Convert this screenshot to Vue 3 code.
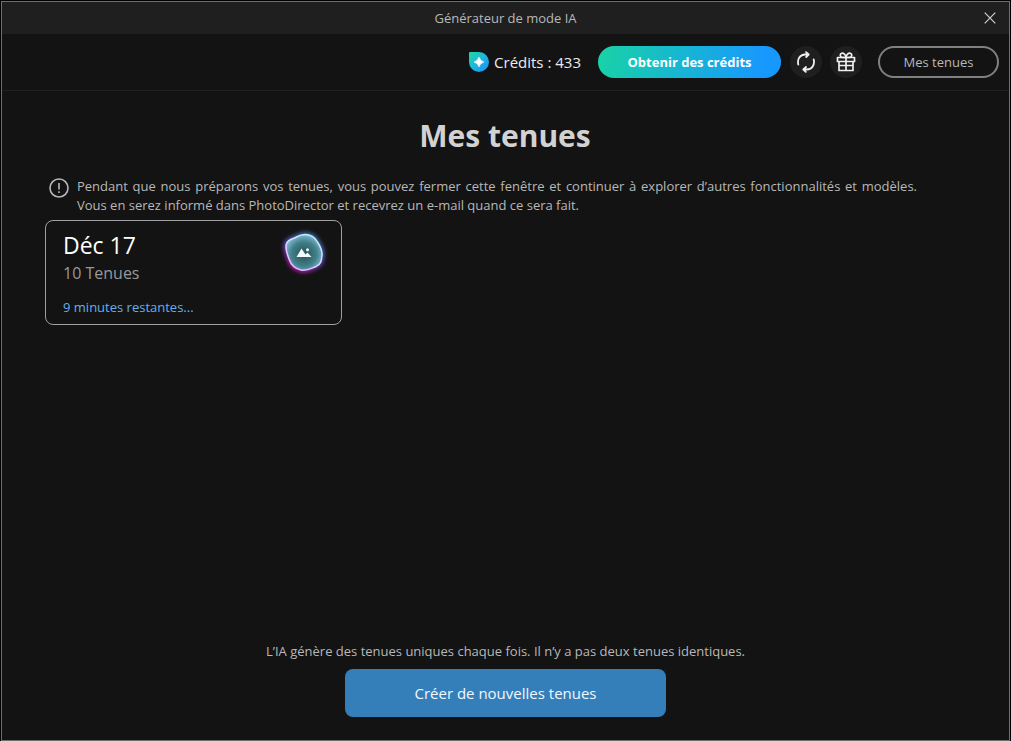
<script setup>
const credits = 433
const outfits = [
  { id: 1, date: 'Déc 17', count: '10 Tenues', status: '9 minutes restantes...' }
]
</script>

<template>
  <div class="window">
    <header class="titlebar">
      <span class="window-title">Générateur de mode IA</span>
      <button class="close" type="button" aria-label="Fermer">
        <svg width="12" height="12" viewBox="0 0 12 12" fill="none" stroke="#cfcfcf" stroke-width="1.2">
          <path d="M.7.7 11.3 11.3M11.3.7.7 11.3" />
        </svg>
      </button>
    </header>

    <nav class="toolbar">
      <div class="credits">
        <svg width="20" height="20" viewBox="0 0 20 20">
          <defs>
            <linearGradient id="credit-fill" x1="0" y1="0" x2="1" y2="1">
              <stop offset="0" stop-color="#1fd8a4" />
              <stop offset=".5" stop-color="#20b5dc" />
              <stop offset="1" stop-color="#1a8cff" />
            </linearGradient>
          </defs>
          <path d="M1 0H10a10 10 0 1 1-10 10V1Q0 0 1 0Z" fill="url(#credit-fill)" />
          <path d="M10 5.200Q11 9 14.800 10 11 11 10 14.800 9 11 5.200 10 9 9 10 5.200Z" fill="#fff" stroke="#fff" stroke-width=".8" stroke-linejoin="round" />
        </svg>
        <span>Crédits : {{ credits }}</span>
      </div>
      <button class="buy" type="button">Obtenir des crédits</button>
      <button class="round" type="button" aria-label="Actualiser">
        <svg width="20" height="22" viewBox="0 0 20 22" fill="none" stroke="#f0f0f0" stroke-width="1.8" stroke-linecap="round" stroke-linejoin="round">
          <path d="M2.300 13.500C1 8 4 3.800 9 3.500H12.500M10 1.100 12.700 3.500 10.200 6" />
          <path d="M17.700 8.500C19 14 16 18.200 11 18.500H7.500M10 16 7.300 18.500 9.800 20.900" />
        </svg>
      </button>
      <button class="round" type="button" aria-label="Cadeau">
        <svg width="20" height="20" viewBox="0 0 20 20" fill="none" stroke="#f0f0f0" stroke-width="1.700" stroke-linejoin="round">
          <path d="M1.500 5.500H18.500V9.500H1.500ZM3 9.500V18.500H17V9.500M10 5.500V18.500M3 13.500H17" />
          <path d="M10 5.500H6.500A2.200 2.200 0 1 1 8.400 2.200Q10 3.500 10 5.500ZM10 5.500H13.500A2.200 2.200 0 1 0 11.600 2.200Q10 3.500 10 5.500Z" />
        </svg>
      </button>
      <button class="mine" type="button">Mes tenues</button>
    </nav>

    <main class="content">
      <h1>Mes tenues</h1>
      <div class="notice">
        <svg width="20" height="20" viewBox="0 0 20 20" fill="none" stroke="#b8b8b8" stroke-width="1.600">
          <circle cx="10" cy="10" r="9" />
          <path d="M10 5V11.500" />
          <path d="M10 13.200V15" />
        </svg>
        <p>
          Pendant que nous préparons vos tenues, vous pouvez fermer cette fenêtre et continuer à explorer d’autres fonctionnalités et modèles.
          Vous en serez informé dans PhotoDirector et recevrez un e-mail quand ce sera fait.
        </p>
      </div>

      <section class="grid">
        <article v-for="item in outfits" :key="item.id" class="card">
          <div class="info">
            <h2>{{ item.date }}</h2>
            <p class="count">{{ item.count }}</p>
            <p class="status">{{ item.status }}</p>
          </div>
          <svg class="orb" width="56" height="56" viewBox="0 0 56 56">
            <defs>
              <radialGradient id="orb-fill" cx=".5" cy=".55" r=".58">
                <stop offset="0" stop-color="#294f55" />
                <stop offset=".6" stop-color="#42808a" />
                <stop offset="1" stop-color="#8ac4dc" />
              </radialGradient>
              <linearGradient id="orb-rim" x1=".8" y1="0" x2=".2" y2="1">
                <stop offset="0" stop-color="#c2efff" />
                <stop offset=".5" stop-color="#d6dcff" />
                <stop offset="1" stop-color="#f2b0ff" />
              </linearGradient>
              <linearGradient id="orb-halo" x1=".75" y1="0" x2=".25" y2="1">
                <stop offset="0" stop-color="#3f8fce" />
                <stop offset=".5" stop-color="#6a55d8" />
                <stop offset="1" stop-color="#d016c0" />
              </linearGradient>
              <filter id="orb-blur" x="-30%" y="-30%" width="160%" height="160%">
                <feGaussianBlur stdDeviation="2" />
              </filter>
            </defs>
            <path d="M29 9.500C35 9.500 39 12.500 41.500 17 44 21 46.500 25 46 30 45.500 36 45 39.500 40 41.500 35 43.500 31 46 25 45 18 43.500 15 40 13 34 11.500 29 8.500 24 10.500 18.500 12.500 14 17 14 20.500 12 23 10.500 26 9.500 29 9.500Z" fill="none" stroke="url(#orb-halo)" stroke-width="4" filter="url(#orb-blur)" />
            <path d="M29 9.500C35 9.500 39 12.500 41.500 17 44 21 46.500 25 46 30 45.500 36 45 39.500 40 41.500 35 43.500 31 46 25 45 18 43.500 15 40 13 34 11.500 29 8.500 24 10.500 18.500 12.500 14 17 14 20.500 12 23 10.500 26 9.500 29 9.500Z" fill="url(#orb-fill)" stroke="url(#orb-rim)" stroke-width="1.500" />
            <path d="M20.500 32 25.500 23.500 29.500 29.500 31.500 27.500 35.500 32Z" fill="#effcff" />
            <circle cx="31.500" cy="24.800" r="1.500" fill="#effcff" />
          </svg>
        </article>
      </section>
    </main>

    <footer class="footer">
      <p>L’IA génère des tenues uniques chaque fois. Il n’y a pas deux tenues identiques.</p>
      <button class="create" type="button">Créer de nouvelles tenues</button>
    </footer>
  </div>
</template>

<style>
body {
  background: #000;
}
</style>

<style scoped>
.window {
  box-sizing: border-box;
  min-height: calc(100vh - 1px);
  margin: 1px 1px 0;
  display: flex;
  flex-direction: column;
  border: 1px solid #6e6e6e;
  background: #131313;
  color: #b8b8b8;
  font: 13px/18px "Open Sans", "Noto Sans", sans-serif;
}

h1,
h2,
p {
  margin: 0;
}

button {
  display: flex;
  align-items: center;
  justify-content: center;
  padding: 0;
  border: 0;
  background: none;
  color: inherit;
  font: inherit;
  cursor: pointer;
}

.titlebar {
  display: grid;
  grid-template-columns: 1fr auto 1fr;
  align-items: center;
  height: 32px;
  background: #1f1f1f;
}

.window-title {
  grid-column: 2;
}

.close {
  justify-self: end;
  width: 38px;
  height: 32px;
}

.toolbar {
  display: flex;
  align-items: center;
  justify-content: flex-end;
  gap: 8px;
  height: 56px;
  padding-right: 10px;
  border-bottom: 1px solid #202020;
}

.credits {
  display: flex;
  align-items: center;
  gap: 5px;
  margin-right: 9px;
  color: #ececec;
  font-size: 15px;
}

.buy {
  width: 183px;
  height: 32px;
  margin-right: 1px;
  border-radius: 16px;
  background: linear-gradient(100deg, #18d3a5, #1798ff 90%);
  color: #fff;
  font-weight: 700;
}

.round {
  width: 32px;
  height: 32px;
  border-radius: 50%;
  background: #1f1f1f;
}

.mine {
  width: 121px;
  height: 32px;
  margin-left: 8px;
  border: 2px solid #808080;
  border-radius: 16px;
}

.content {
  flex: 1;
  padding: 25px 44px 0 43px;
}

h1 {
  color: #d2d2d2;
  font-size: 30px;
  line-height: 40px;
  text-align: center;
}

.notice {
  display: flex;
  gap: 8px;
  margin-top: 21px;
  padding-left: 4px;
}

.notice svg {
  flex: none;
  margin-top: 1px;
}

.notice p {
  max-width: 840px;
  line-height: 19px;
  text-align: justify;
}

.grid {
  display: grid;
  grid-template-columns: repeat(auto-fill, 297px);
  gap: 16px;
  margin-top: 5px;
}

.card {
  display: flex;
  align-items: flex-start;
  justify-content: space-between;
  padding: 4px 9px 8px 17px;
  border: 1px solid #a0a0a0;
  border-radius: 8px;
}

.info {
  padding-top: 5px;
}

.card h2 {
  color: #fff;
  font-size: 23px;
  font-weight: 400;
  line-height: 30px;
}

.count {
  color: #999;
  font-size: 16px;
  line-height: 26px;
}

.status {
  margin-top: 12px;
  color: #62b0f0;
}

.footer {
  display: flex;
  flex-direction: column;
  align-items: center;
  gap: 9px;
  padding-bottom: 23px;
}

.create {
  width: 321px;
  height: 48px;
  border-radius: 8px;
  background: #347fba;
  color: #f0f8ff;
  font-size: 15px;
}
</style>
